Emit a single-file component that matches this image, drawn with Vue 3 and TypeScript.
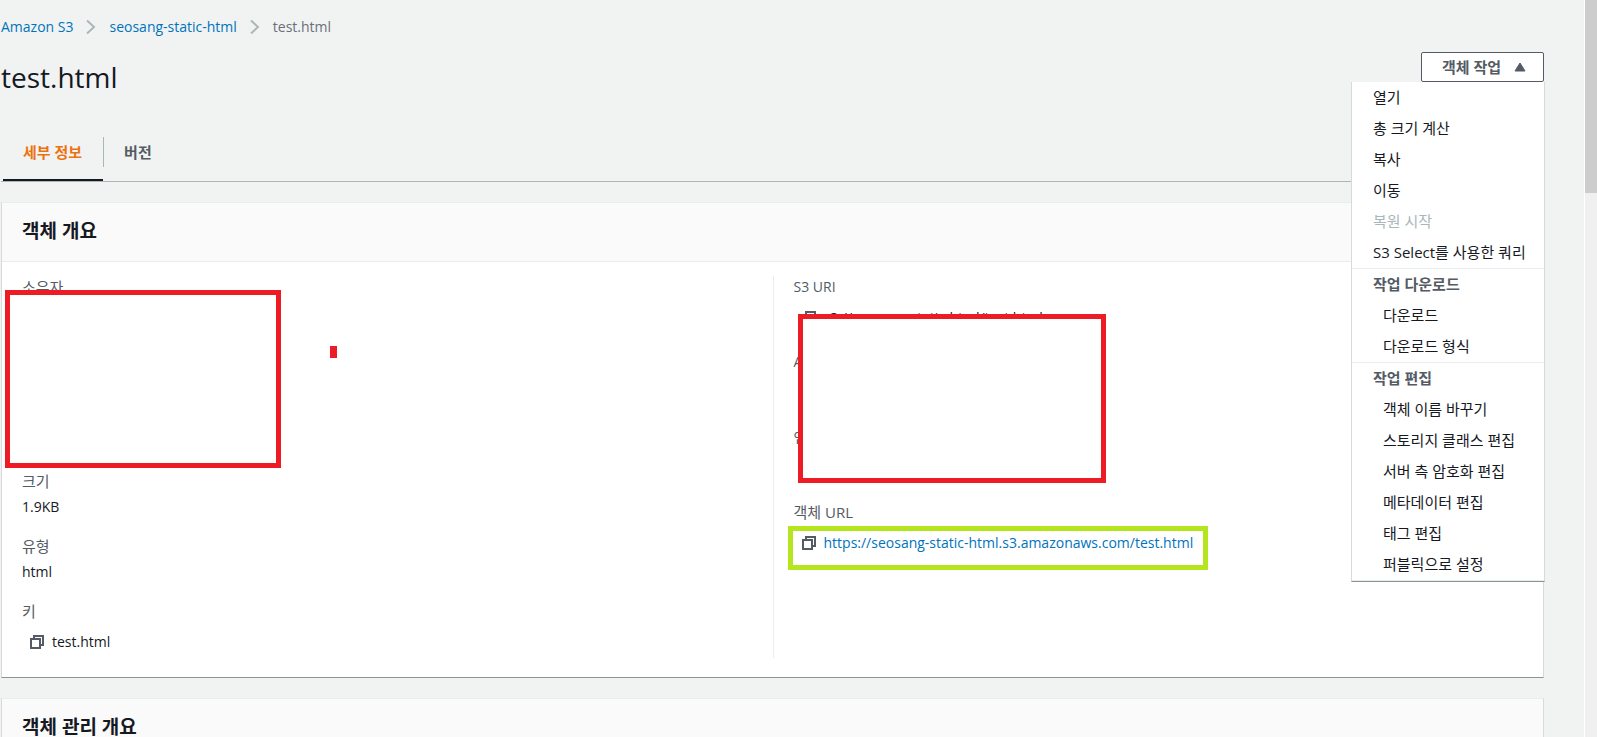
<script setup lang="ts">
import { ref } from 'vue'

interface MenuItem {
  label: string
  disabled?: boolean
}

interface MenuGroup {
  title?: string
  items: MenuItem[]
}

const menuOpen = ref(true)
const activeTab = ref('세부 정보')
const tabs: string[] = ['세부 정보', '버전']

const menuGroups: MenuGroup[] = [
  {
    items: [
      { label: '열기' },
      { label: '총 크기 계산' },
      { label: '복사' },
      { label: '이동' },
      { label: '복원 시작', disabled: true },
      { label: 'S3 Select를 사용한 쿼리' },
    ],
  },
  {
    title: '작업 다운로드',
    items: [{ label: '다운로드' }, { label: '다운로드 형식' }],
  },
  {
    title: '작업 편집',
    items: [
      { label: '객체 이름 바꾸기' },
      { label: '스토리지 클래스 편집' },
      { label: '서버 측 암호화 편집' },
      { label: '메타데이터 편집' },
      { label: '태그 편집' },
      { label: '퍼블릭으로 설정' },
    ],
  },
]
</script>

<template>
  <div class="page">
    <main class="content">
      <nav class="breadcrumb" aria-label="breadcrumb">
        <a href="#">Amazon S3</a>
        <svg viewBox="0 0 10 16"><path d="M1 1.5 8 8l-7 6.500" /></svg>
        <a href="#">seosang-static-html</a>
        <svg viewBox="0 0 10 16"><path d="M1 1.5 8 8l-7 6.500" /></svg>
        <span>test.html</span>
      </nav>

      <header class="title-row">
        <h1>test.html</h1>
        <div class="dropdown">
          <button class="trigger" type="button" :aria-expanded="menuOpen" @click="menuOpen = !menuOpen">
            객체 작업
            <svg viewBox="0 0 12 10"><path d="M6 1 11 9H1Z" /></svg>
          </button>
          <div v-if="menuOpen" class="menu">
            <div v-for="(group, g) in menuGroups" :key="g" class="group" :class="{ titled: group.title }">
              <h3 v-if="group.title">{{ group.title }}</h3>
              <button v-for="item in group.items" :key="item.label" type="button" :disabled="item.disabled">
                {{ item.label }}
              </button>
            </div>
          </div>
        </div>
      </header>

      <div class="tabs" role="tablist">
        <button
          v-for="tab in tabs"
          :key="tab"
          type="button"
          role="tab"
          :aria-selected="tab === activeTab"
          :class="{ active: tab === activeTab }"
          @click="activeTab = tab"
        >
          <span>{{ tab }}</span>
        </button>
      </div>

      <section class="panel">
        <h2>객체 개요</h2>
        <div class="columns">
          <dl class="column">
            <div class="field owner">
              <dt>소유자</dt>
            </div>
            <div class="field">
              <dt>크기</dt>
              <dd>1.9KB</dd>
            </div>
            <div class="field">
              <dt>유형</dt>
              <dd>html</dd>
            </div>
            <div class="field">
              <dt>키</dt>
              <dd class="copyable">
                <button type="button" aria-label="복사">
                  <svg viewBox="0 0 14 14"><path d="M1 4h9v9H1zM4 4V1h9v9h-3" /></svg>
                </button>
                test.html
              </dd>
            </div>
            <div class="cover cover-owner"></div>
            <div class="speck"></div>
          </dl>
          <dl class="column">
            <div class="field">
              <dt class="latin">S3 URI</dt>
              <dd class="copyable">
                <button type="button" aria-label="복사">
                  <svg viewBox="0 0 14 14"><path d="M1 4h9v9H1zM4 4V1h9v9h-3" /></svg>
                </button>
                s3://seosang-static-html/test.html
              </dd>
            </div>
            <div class="field">
              <dt class="latin">A</dt>
              <dd class="copyable"></dd>
            </div>
            <div class="field">
              <dt>엔</dt>
              <dd class="copyable"></dd>
            </div>
            <div class="field">
              <dt>객체 URL</dt>
              <dd class="copyable">
                <button type="button" aria-label="복사">
                  <svg viewBox="0 0 14 14"><path d="M1 4h9v9H1zM4 4V1h9v9h-3" /></svg>
                </button>
                <a href="#">https://seosang-static-html.s3.amazonaws.com/test.html</a>
              </dd>
            </div>
            <div class="cover cover-uri"></div>
            <div class="highlight"></div>
          </dl>
        </div>
      </section>

      <section class="panel">
        <h2>객체 관리 개요</h2>
      </section>
    </main>
    <div class="scrollbar"><div class="thumb"></div></div>
  </div>
</template>

<style>
body {
  margin: 0;
  background: #f2f3f3;
}
</style>

<style scoped>
.page {
  display: flex;
  height: 100vh;
  overflow: hidden;
  background: #f1f3f3;
  color: #16191f;
  font-family: 'Open Sans', 'Noto Sans CJK KR', sans-serif;
  font-size: 14px;
  line-height: 22px;
}

button {
  margin: 0;
  padding: 0;
  border: 0;
  background: none;
  color: inherit;
  font: inherit;
  cursor: pointer;
}

a {
  color: #0073bb;
  text-decoration: none;
}

h1,
h2,
h3,
dl,
dd {
  margin: 0;
}

.content {
  flex: 1;
  min-width: 0;
  padding: 16px 40px 0 1px;
}

.breadcrumb {
  display: flex;
  align-items: center;
  color: #687078;
}

.breadcrumb svg {
  width: 10px;
  height: 16px;
  margin: 0 13px;
  fill: none;
  stroke: #aab7b8;
  stroke-width: 2;
}

.title-row {
  display: flex;
  justify-content: space-between;
  align-items: flex-start;
  margin-top: 14px;
}

h1 {
  margin-top: 7px;
  font-size: 28px;
  font-weight: 400;
  line-height: 36px;
}

.dropdown {
  position: relative;
}

.trigger {
  display: flex;
  align-items: center;
  gap: 13px;
  height: 30px;
  padding: 0 17px 0 20px;
  border: 1px solid #545b64;
  border-radius: 2px;
  background: #fff;
  color: #545b64;
  font-size: 15px;
  font-weight: 700;
}

.trigger svg {
  width: 12px;
  height: 10px;
  fill: #545b64;
  stroke: #545b64;
  stroke-linejoin: round;
}

.menu {
  position: absolute;
  z-index: 5;
  top: 100%;
  right: -1px;
  box-sizing: border-box;
  min-width: 194px;
  border: 1px solid #d5dbdb;
  border-top: 0;
  border-bottom-color: #879596;
  background: #fff;
  font-size: 15px;
  white-space: nowrap;
}

.group {
  border-bottom: 1px solid #eaeded;
}

.group h3,
.group button {
  display: block;
  width: 100%;
  box-sizing: border-box;
  padding: 0 18px 0 21px;
  font-size: inherit;
  line-height: 31px;
  text-align: left;
}

.group h3 {
  color: #545b64;
  font-weight: 700;
}

.titled button {
  padding-left: 31px;
}

.group button:disabled {
  color: #aab7b8;
}

.tabs {
  display: flex;
  margin-top: 30px;
  padding-left: 2px;
  border-bottom: 1px solid #aab7b8;
}

.tabs button {
  padding: 12px 0;
  border-bottom: 2px solid transparent;
  color: #545b64;
  font-size: 15px;
  font-weight: 700;
}

.tabs span {
  display: block;
  padding: 4px 21px 4px 20px;
}

.tabs button + button span {
  border-left: 1px solid #aab7b8;
}

.tabs .active {
  border-bottom-color: #16191f;
  color: #ec7211;
}

.panel {
  margin-top: 20px;
  border: 1px solid #d5dbdb;
  border-top-color: #eaeded;
  border-bottom-color: #879596;
  background: #fff;
}

h2 {
  padding: 14px 20px 16px;
  border-bottom: 1px solid #eaeded;
  background: #fafafa;
  font-size: 19px;
  font-weight: 700;
  line-height: 28px;
}

.columns {
  display: grid;
  grid-template-columns: 1fr 1fr;
  padding: 14px 0 19px;
}

.column {
  position: relative;
  padding: 0 20px;
}

.column + .column {
  border-left: 1px solid #eaeded;
}

.field + .field {
  margin-top: 17px;
}

.owner {
  min-height: 177px;
}

dt {
  color: #545b64;
  font-size: 15px;
}

.latin {
  font-size: 14px;
}

dd {
  margin-top: 4px;
}

.copyable {
  display: flex;
  align-items: center;
  height: 32px;
}

.copyable button {
  display: flex;
  padding: 8px;
}

.copyable svg {
  width: 14px;
  height: 14px;
  fill: none;
  stroke: #545b64;
  stroke-width: 2;
}

.cover {
  position: absolute;
  box-sizing: border-box;
  border: 5px solid #ed1c24;
  background: #fff;
}

.cover-owner {
  top: 14px;
  left: 3px;
  width: 276px;
  height: 178px;
}

.cover-uri {
  top: 38px;
  left: 24px;
  width: 308px;
  height: 169px;
}

.speck {
  position: absolute;
  top: 70px;
  left: 328px;
  width: 7px;
  height: 12px;
  background: #ed1c24;
}

.highlight {
  position: absolute;
  top: 250px;
  left: 14px;
  box-sizing: border-box;
  width: 420px;
  height: 44px;
  border: 5px solid #b5e61d;
  pointer-events: none;
}

.scrollbar {
  width: 12px;
  border-left: 1px solid #fff;
  background: #f0f0f0;
}

.thumb {
  height: 193px;
  background: #cdcdcd;
}
</style>
